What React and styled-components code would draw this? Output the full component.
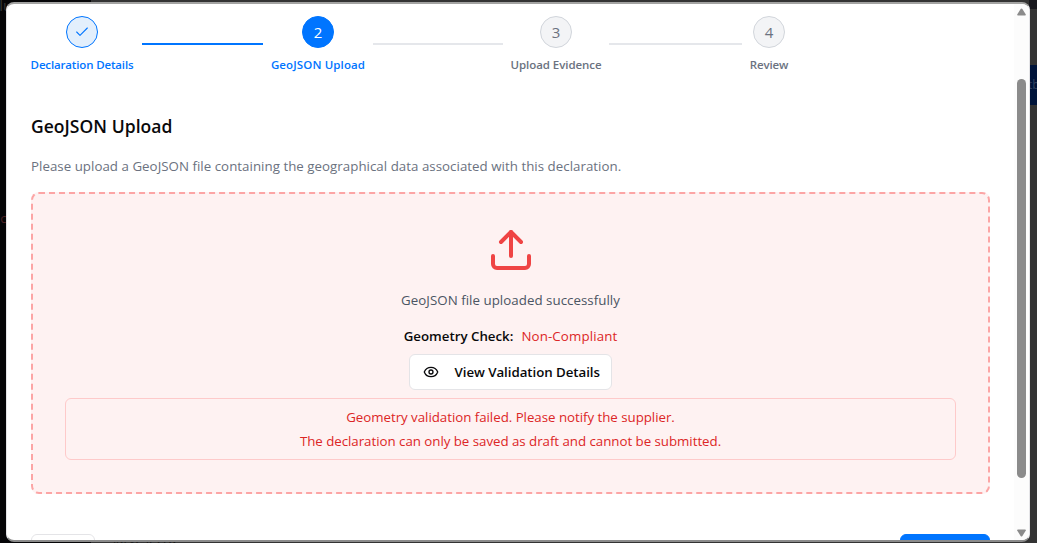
import React from "react";
import styled, { createGlobalStyle } from "styled-components";
import { Check, Upload, Eye } from "lucide-react";

const Global = createGlobalStyle`
  * { box-sizing: border-box; }
  html, body { margin: 0; height: 100%; overflow: hidden; }
  body { font-family: "Segoe UI", "Open Sans", "Noto Sans", sans-serif; font-size: 13.3px; color: #09090b; }
`;

const Page = styled.div`
  position: relative;
  display: flex;
  width: 1037px;
  height: 543px;
  overflow: hidden;
  background: #333333;
`;
const Sidebar = styled.div`
  width: 91px;
  height: 543px;
  background: #050507;
`;
const Backdrop = styled.span`
  position: absolute;
  left: ${(p) => p.$x}px;
  top: ${(p) => p.$y}px;
  font-size: ${(p) => p.$size || 14}px;
  line-height: 20px;
  color: ${(p) => p.$color};
  white-space: nowrap;
`;
const BackdropButton = styled.div`
  position: absolute;
  left: 1000px;
  top: 65px;
  width: 60px;
  height: 40px;
  background: #00143a;
`;
const BackdropCorner = styled.div`
  position: absolute;
  left: 1029px;
  top: 0;
  width: 8px;
  height: 9px;
  background: #17171c;
`;

const Dialog = styled.div`
  position: absolute;
  left: 6px;
  top: 2px;
  width: 1024px;
  height: 540px;
  display: flex;
  overflow: hidden;
  background: #ffffff;
  border: 1px solid #e4e4e7;
  border-top: 2px solid #a3a3a2;
  border-bottom: 2px solid #8b8b8b;
  border-radius: 8px;
`;
const Content = styled.div`
  flex: 1;
  height: 100%;
  padding: 11px 24px 0;
  overflow: hidden;
`;

const Stepper = styled.div`
  display: flex;
  align-items: center;
  width: 759px;
  height: 57px;
`;
const Step = styled.div`
  display: flex;
  flex-direction: column;
  align-items: center;
  flex: none;
  width: ${(p) => p.$width}px;
`;
const StepCircle = styled.div`
  display: flex;
  align-items: center;
  justify-content: center;
  width: 32px;
  height: 32px;
  border-radius: 50%;
  font-size: 15px;
  color: ${(p) => ({ done: "#0075ff", active: "#ffffff", idle: "#6b7280" })[p.$state]};
  background: ${(p) => ({ done: "#e3effc", active: "#0075ff", idle: "#f3f4f6" })[p.$state]};
  border: 1px solid ${(p) => (p.$state === "idle" ? "#d1d5db" : "#0075ff")};
`;
const StepLabel = styled.div`
  margin-top: 9px;
  margin-bottom: -1px;
  font-size: 11.5px;
  font-weight: 600;
  line-height: 16px;
  letter-spacing: ${(p) => p.$spacing || 0}px;
  white-space: nowrap;
  color: ${(p) => (p.$state === "idle" ? "#6b7280" : "#0075ff")};
`;
const Connector = styled.div`
  flex: none;
  width: ${(p) => p.$width}px;
  height: 2px;
  margin: 0 8px 0 ${(p) => (p.$done ? 9 : 8)}px;
  background: ${(p) => (p.$done ? "#0075ff" : "#e5e7eb")};
`;

const Title = styled.h3`
  margin: 40px 0 0;
  font-size: 17.5px;
  font-weight: 600;
  line-height: 28px;
  letter-spacing: 0.04px;
  color: #09090b;
`;
const Description = styled.p`
  margin: 16px 0 0;
  line-height: 20px;
  letter-spacing: 0.03px;
  color: #6b7280;
  white-space: nowrap;
`;

const DropZone = styled.div`
  display: flex;
  flex-direction: column;
  align-items: center;
  width: 959px;
  height: 302px;
  margin-top: 16px;
  padding: 32px;
  background: #fef2f2;
  border: 2px dashed #fca5a5;
  border-radius: 8px;
`;
const ZoneMessage = styled.p`
  margin: 16px 0 0;
  line-height: 20px;
  letter-spacing: 0.04px;
  color: #4b5563;
`;
const CheckRow = styled.div`
  display: flex;
  gap: 8px;
  margin-top: 16px;
  line-height: 20px;
`;
const CheckLabel = styled.span`
  font-weight: 600;
`;
const CheckResult = styled.span`
  letter-spacing: 0.13px;
  color: #dc2626;
`;
const OutlineButton = styled.button`
  display: flex;
  align-items: center;
  gap: 16px;
  width: 203px;
  height: 36px;
  flex: none;
  margin-top: 8px;
  padding: 0 0 0 12.5px;
  font: inherit;
  font-weight: 600;
  letter-spacing: -0.05px;
  white-space: nowrap;
  color: #09090b;
  background: #ffffff;
  border: 1px solid #e4e4e7;
  border-radius: 6px;
`;
const ErrorBox = styled.div`
  align-self: stretch;
  height: 62px;
  flex: none;
  margin-top: 8px;
  padding: 6px 0;
  border: 1px solid #fecaca;
  border-radius: 6px;
  text-align: center;
  line-height: 24px;
  letter-spacing: -0.03px;
  color: #dc2626;
`;

const Footer = styled.div`
  display: flex;
  justify-content: space-between;
  width: 959px;
  margin-top: 40px;
`;
const FooterButton = styled.div`
  width: ${(p) => p.$width}px;
  height: 40px;
  border-radius: 6px;
  border: 1px solid ${(p) => (p.$primary ? "#0075ff" : "#e4e4e7")};
  background: ${(p) => (p.$primary ? "#0075ff" : "#ffffff")};
`;

const Scrollbar = styled.div`
  display: flex;
  flex-direction: column;
  align-items: center;
  width: 15px;
  height: 100%;
  background: #fcfcfc;
`;
const Arrow = styled.svg`
  display: block;
  flex: none;
  width: 9px;
  height: 8px;
  margin-top: ${(p) => p.$top}px;
  fill: #8b8b8b;
`;
const Thumb = styled.div`
  width: 9px;
  height: 399px;
  flex: none;
  margin-top: 63px;
  border-radius: 5px;
  background: #8b8b8b;
`;

export default function App() {
  return (
    <Page>
      <Global />
      <Sidebar />
      <Backdrop $x={-10} $y={-5} $size={15} $color="#343434">plu</Backdrop>
      <Backdrop $x={-3} $y={208} $size={13} $color="#4a2023">ic</Backdrop>
      <Backdrop $x={113} $y={529} $size={13} $color="#111111">larvest cru</Backdrop>
      <BackdropCorner />
      <BackdropButton />
      <Backdrop $x={1028} $y={75} $size={12} $color="#33425f">tb</Backdrop>
      <Dialog>
        <Content>
          <Stepper>
            <Step $width={102}>
              <StepCircle $state="done"><Check size={16} strokeWidth={1.6} /></StepCircle>
              <StepLabel $state="done" $spacing={-0.15}>Declaration Details</StepLabel>
            </Step>
            <Connector $width={121} $done />
            <Step $width={94}>
              <StepCircle $state="active">2</StepCircle>
              <StepLabel $state="active" $spacing={0.12}>GeoJSON Upload</StepLabel>
            </Step>
            <Connector $width={130} />
            <Step $width={90}>
              <StepCircle $state="idle">3</StepCircle>
              <StepLabel $state="idle" $spacing={-0.05}>Upload Evidence</StepLabel>
            </Step>
            <Connector $width={133} />
            <Step $width={38}>
              <StepCircle $state="idle">4</StepCircle>
              <StepLabel $state="idle" $spacing={-0.1}>Review</StepLabel>
            </Step>
          </Stepper>
          <Title>GeoJSON Upload</Title>
          <Description>
            Please upload a GeoJSON file containing the geographical data associated with this declaration.
          </Description>
          <DropZone>
            <Upload size={48} color="#ef4444" strokeWidth={2} />
            <ZoneMessage>GeoJSON file uploaded successfully</ZoneMessage>
            <CheckRow>
              <CheckLabel>Geometry Check:</CheckLabel>
              <CheckResult>Non-Compliant</CheckResult>
            </CheckRow>
            <OutlineButton>
              <Eye size={16} />
              View Validation Details
            </OutlineButton>
            <ErrorBox>
              <div>Geometry validation failed. Please notify the supplier.</div>
              <div>The declaration can only be saved as draft and cannot be submitted.</div>
            </ErrorBox>
          </DropZone>
          <Footer>
            <FooterButton $width={64} />
            <FooterButton $width={90} $primary />
          </Footer>
        </Content>
        <Scrollbar>
          <Arrow $top={4} viewBox="0 0 9 8"><path d="M4.5 .5Q5 .5 5.4 1L8.8 6.5Q9 7.5 8 7.5H1Q0 7.5 .2 6.5L3.6 1Q4 .5 4.5 .5Z" /></Arrow>
          <Thumb />
          <Arrow $top={51} viewBox="0 0 9 8"><path d="M4.5 7.5Q5 7.5 5.4 7L8.8 1.5Q9 .5 8 .5H1Q0 .5 .2 1.5L3.6 7Q4 7.5 4.5 7.5Z" /></Arrow>
        </Scrollbar>
      </Dialog>
    </Page>
  );
}
